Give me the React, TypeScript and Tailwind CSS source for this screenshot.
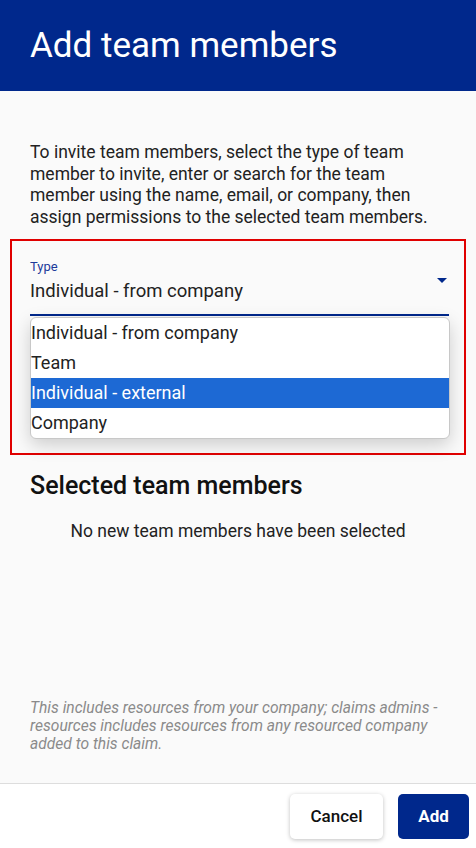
export default function App() {
  const options = ["Individual - from company", "Team", "Individual - external", "Company"];
  return (
    <div className="flex h-[848px] w-[476px] flex-col overflow-hidden bg-[#fafafa] font-['Roboto',sans-serif]">
      <header className="flex h-[91px] shrink-0 items-center bg-[#00288c] px-[30px]">
        <h1 className="text-[35px] font-normal leading-[44px] text-white">Add team members</h1>
      </header>
      <main className="flex flex-1 flex-col px-[10px] pt-[51px]">
        <p className="px-[20px] text-[17.5px] leading-[21.5px] text-[#222]">
          To invite team members, select the type of team member to invite, enter or search for the team member using the name, email, or company, then assign permissions to the selected team members.
        </p>
        <div className="relative mt-[11px] h-[216px] border-2 border-[#e00000] pl-[18px] pr-[15px] pt-[18px]">
          <div className="relative border-b-2 border-[#00288c] pb-[11px]">
            <div className="text-[13px] leading-[16px] text-[#1d3a9a]">Type</div>
            <div className="mt-[4px] text-[18.5px] leading-[24px] text-[#222]">Individual - from company</div>
            <svg className="absolute right-[2px] top-[19px]" width="10" height="5" viewBox="0 0 10 5">
              <path d="M0 0 L10 0 L5 5 Z" fill="#00288c" />
            </svg>
          </div>
          <div className="absolute left-[18px] right-[14px] top-[76px] overflow-hidden rounded-[6px] border border-[#c8c8c8] bg-white shadow-[0_6px_18px_rgba(0,0,0,0.18)]">
            {options.map((o, i) => (
              <div
                key={o}
                className={
                  i === 2
                    ? "h-[30px] bg-[#1d69d4] text-[18px] leading-[30px] text-white"
                    : "h-[30px] text-[18px] leading-[30px] text-[#222]"
                }
              >
                {o}
              </div>
            ))}
          </div>
        </div>
        <h2 className="mt-[16px] px-[20px] text-[25px] font-medium leading-[30px] text-[#111]">Selected team members</h2>
        <p className="mt-[19px] text-center text-[17.5px] leading-[22px] text-[#222]">No new team members have been selected</p>
        <div className="flex-1" />
        <p className="pl-[20px] pr-[14px] pb-[30px] text-[15.6px] italic leading-[18px] text-[#8a8a8a]">
          This includes resources from your company; claims admins - resources includes resources from any resourced company added to this claim.
        </p>
      </main>
      <footer className="flex h-[65px] shrink-0 items-start justify-end gap-[15px] border-t border-[#dddddd] bg-white pr-[7px] pt-[10px]">
        <button className="h-[45px] w-[93px] rounded-[5px] bg-white text-[17px] font-medium text-[#111] shadow-[0_1px_4px_rgba(0,0,0,0.25)]">Cancel</button>
        <button className="h-[45px] w-[71px] rounded-[5px] bg-[#00288c] text-[17px] font-bold text-white">Add</button>
      </footer>
    </div>
  );
}
